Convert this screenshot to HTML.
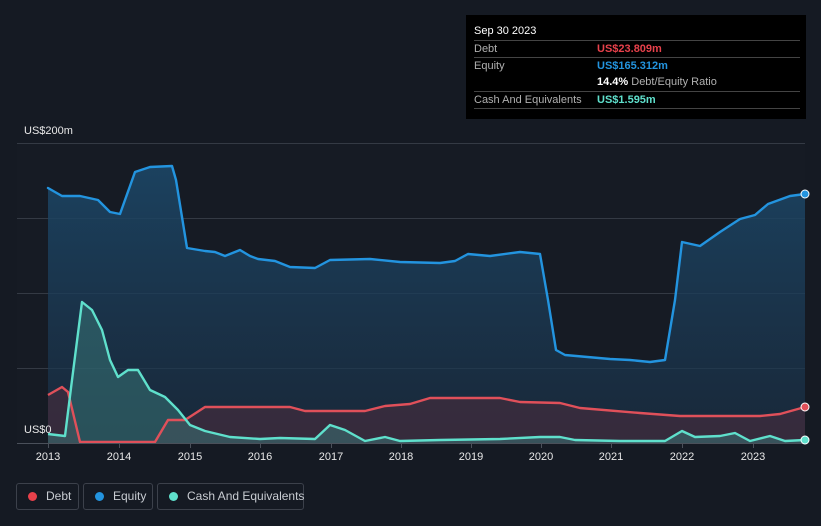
<!DOCTYPE html>
<html><head><meta charset="utf-8"><style>
body{margin:0;width:821px;height:526px;background:#151a23;font-family:"Liberation Sans",sans-serif;overflow:hidden;position:relative}
.tip{position:absolute;left:466px;top:15px;width:340px;height:104px;background:#000;color:#fff;font-size:11px}
.row{position:absolute;left:8px;width:326px;height:17px;border-top:1px solid #444;line-height:17px}
.lab{color:#b0b0b0;position:absolute;left:0}
.val{position:absolute;left:123px;font-weight:bold}
.leg{position:absolute;top:483px;height:27px;border:1px solid #3c414b;border-radius:3px;color:#c8ccd2;font-size:12px;line-height:25px;box-sizing:border-box;white-space:nowrap}
.dot{display:inline-block;width:9px;height:9px;border-radius:50%;margin:0 9px 0 11px;vertical-align:-1px}
.ax{position:absolute;color:#e8e8e8;font-size:11px}
</style></head><body>
<svg width="821" height="526" style="position:absolute;left:0;top:0">
<defs>
<linearGradient id="ge" x1="0" y1="0" x2="0" y2="1"><stop offset="0" stop-color="#1c4666" stop-opacity=".9"/><stop offset="1" stop-color="#1a3148" stop-opacity=".6"/></linearGradient>
</defs>
<rect x="17" y="143" width="788" height="300" fill="#161b24"/>
<g stroke="#343a44" stroke-width="1">
<line x1="17" y1="143.5" x2="805" y2="143.5"/><line x1="17" y1="218.5" x2="805" y2="218.5"/><line x1="17" y1="293.5" x2="805" y2="293.5"/><line x1="17" y1="368.5" x2="805" y2="368.5"/>
</g>
<path fill="url(#ge)" d="M48,188 L62,196 80,196 98,200 110,212 120,214 135,172 150,167 172,166 176,180 187,248 205,251 215,252 225,256 240,250 250,256 258,259 275,261 290,267 315,268 330,260 370,259 400,262 440,263 455,261 468,254 490,256 520,252 540,254 548,300 556,350 565,355 610,359 630,360 650,362 665,360 675,300 682,242 700,246 720,232 740,219 755,215 768,204 790,196 805,194 L805,443 48,443Z"/>
<path fill="#4a2d3e" fill-opacity=".6" d="M48,395 L62,387 68,392 80,442 155,442 168,420 185,420 205,407 290,407 305,411 365,411 385,406 410,404 430,398 500,398 520,402 560,403 580,408 640,413 680,416 760,416 780,414 805,407 L805,443 48,443Z"/>
<path fill="#3a7a7a" fill-opacity=".5" d="M48,434 L65,436 72,380 82,302 92,310 102,330 110,360 118,377 128,370 138,370 150,390 165,397 178,410 190,425 205,431 230,437 260,439 280,438 315,439 330,425 345,430 365,441 385,437 400,441 440,440 500,439 540,437 560,437 575,440 620,441 665,441 682,431 695,437 720,436 735,433 750,441 770,436 785,441 805,440 L805,443 48,443Z"/>
<path fill="none" stroke="#2394df" stroke-width="2.4" stroke-linejoin="round" stroke-linecap="round" d="M48,188 L62,196 80,196 98,200 110,212 120,214 135,172 150,167 172,166 176,180 187,248 205,251 215,252 225,256 240,250 250,256 258,259 275,261 290,267 315,268 330,260 370,259 400,262 440,263 455,261 468,254 490,256 520,252 540,254 548,300 556,350 565,355 610,359 630,360 650,362 665,360 675,300 682,242 700,246 720,232 740,219 755,215 768,204 790,196 805,194"/>
<path fill="none" stroke="#e0505a" stroke-width="2.4" stroke-linejoin="round" d="M48,395 L62,387 68,392 80,442 155,442 168,420 185,420 205,407 290,407 305,411 365,411 385,406 410,404 430,398 500,398 520,402 560,403 580,408 640,413 680,416 760,416 780,414 805,407"/>
<path fill="none" stroke="#5fe0cc" stroke-width="2.4" stroke-linejoin="round" d="M48,434 L65,436 72,380 82,302 92,310 102,330 110,360 118,377 128,370 138,370 150,390 165,397 178,410 190,425 205,431 230,437 260,439 280,438 315,439 330,425 345,430 365,441 385,437 400,441 440,440 500,439 540,437 560,437 575,440 620,441 665,441 682,431 695,437 720,436 735,433 750,441 770,436 785,441 805,440"/>
<line x1="17" y1="443.5" x2="805" y2="443.5" stroke="#4a505a"/>
<g stroke="#4a505a"><line x1="48.5" y1="443" x2="48.5" y2="448"/><line x1="119.5" y1="443" x2="119.5" y2="448"/><line x1="190.5" y1="443" x2="190.5" y2="448"/><line x1="260.5" y1="443" x2="260.5" y2="448"/><line x1="331.5" y1="443" x2="331.5" y2="448"/><line x1="401.5" y1="443" x2="401.5" y2="448"/><line x1="471.5" y1="443" x2="471.5" y2="448"/><line x1="541.5" y1="443" x2="541.5" y2="448"/><line x1="611.5" y1="443" x2="611.5" y2="448"/><line x1="682.5" y1="443" x2="682.5" y2="448"/><line x1="753.5" y1="443" x2="753.5" y2="448"/></g>
<circle cx="805" cy="194" r="4" fill="#2394df" stroke="#fff" stroke-width="1"/>
<circle cx="805" cy="407" r="4" fill="#e0505a" stroke="#fff" stroke-width="1"/>
<circle cx="805" cy="440" r="4" fill="#5fe0cc" stroke="#fff" stroke-width="1"/>
<g fill="#e8e8e8" font-size="11" font-family="Liberation Sans,sans-serif" text-anchor="middle">
<text x="48" y="460">2013</text><text x="119" y="460">2014</text><text x="190" y="460">2015</text><text x="260" y="460">2016</text><text x="331" y="460">2017</text><text x="401" y="460">2018</text><text x="471" y="460">2019</text><text x="541" y="460">2020</text><text x="611" y="460">2021</text><text x="682" y="460">2022</text><text x="753" y="460">2023</text>
</g>
</svg>
<div class="ax" style="left:24px;top:125px">US$200m</div>
<div class="ax" style="left:24px;top:424px">US$0</div>
<div class="tip">
<div style="position:absolute;left:8px;top:10px;font-size:11px">Sep 30 2023</div>
<div class="row" style="top:25px"><span class="lab">Debt</span><span class="val" style="color:#e8414b">US$23.809m</span></div>
<div class="row" style="top:42px"><span class="lab">Equity</span><span class="val" style="color:#2394df">US$165.312m</span></div>
<div class="row" style="top:59px;border-top:none"><span class="val" style="color:#fff">14.4% <span style="color:#b0b0b0;font-weight:normal">Debt/Equity Ratio</span></span></div>
<div class="row" style="top:76px"><span class="lab">Cash And Equivalents</span><span class="val" style="color:#5fe0cc">US$1.595m</span></div>
<div class="row" style="top:93px;height:0"></div>
</div>
<div class="leg" style="left:16px;width:63px"><span class="dot" style="background:#e8414b"></span>Debt</div>
<div class="leg" style="left:83px;width:70px"><span class="dot" style="background:#2394df"></span>Equity</div>
<div class="leg" style="left:157px;width:147px"><span class="dot" style="background:#5fe0cc"></span>Cash And Equivalents</div>
</body></html>
